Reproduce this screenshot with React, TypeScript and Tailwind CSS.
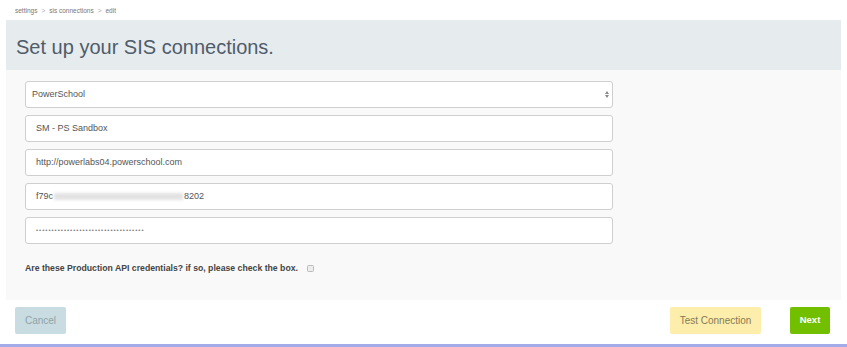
import React from "react";

const font = { fontFamily: '"Liberation Sans", Arial, Helvetica, sans-serif' };

function Field({ children, select }: { children: React.ReactNode; select?: boolean }) {
  return (
    <div className="relative flex h-[27px] w-[588px] items-center rounded-[3px] border border-[#cfcfcf] bg-white text-[9px] text-[#555]">
      {children}
      {select && (
        <div className="absolute right-[3px] top-[9px] flex flex-col items-center gap-[1px]">
          <div className="h-0 w-0 border-x-[2.5px] border-b-[3px] border-x-transparent border-b-[#888]" />
          <div className="h-0 w-0 border-x-[2.5px] border-t-[3px] border-x-transparent border-t-[#888]" />
        </div>
      )}
    </div>
  );
}

export default function App() {
  const dots = "•".repeat(35);
  return (
    <div className="h-[347px] w-[847px] bg-white" style={font}>
      <div className="flex h-[20px] items-center gap-[4px] pl-[15px] pt-[1px] text-[6.5px] text-[#777]">
        <span>settings</span>
        <span className="text-[#aaa]">&gt;</span>
        <span>sis connections</span>
        <span className="text-[#aaa]">&gt;</span>
        <span>edit</span>
      </div>
      <div className="ml-[6px] mr-[6px]">
        <div className="flex h-[50px] items-center bg-[#e6ebee] pl-[10px] pt-[3px]">
          <h1 className="text-[20px] text-[#4f5c6a]">Set up your SIS connections.</h1>
        </div>
        <div className="h-[230px] bg-[#f9f9f9] pl-[19px] pt-[11px]">
          <div className="flex flex-col gap-[7px]">
            <Field select>
              <span className="pl-[6px]">PowerSchool</span>
            </Field>
            <Field>
              <span className="pl-[10px]">SM - PS Sandbox</span>
            </Field>
            <Field>
              <span className="pl-[10px]">http://powerlabs04.powerschool.com</span>
            </Field>
            <Field>
              <span className="pl-[10px]">f79c</span>
              <span className="mx-[1px] h-[7px] w-[129px] bg-[#e2e2e2] blur-[1.5px]" />
              <span>8202</span>
            </Field>
            <Field>
              <span className="pl-[10px] text-[6px] tracking-[1px] text-[#777]">{dots}</span>
            </Field>
          </div>
          <div className="mt-[18px] flex items-center gap-[9px]">
            <span className="text-[8.7px] font-bold text-[#444]">
              Are these Production API credentials? if so, please check the box.
            </span>
            <span className="h-[7px] w-[7px] rounded-[1.5px] border border-[#bbb] bg-[#eee]" />
          </div>
        </div>
        <div className="flex h-[41px] items-center justify-between bg-white pl-[9px] pr-[11px]">
          <button className="flex h-[27px] w-[51px] items-center justify-center rounded-[2px] bg-[#c8dce2] text-[10px] text-[#8fa3a8]">
            Cancel
          </button>
          <div className="flex items-center gap-[29px]">
            <button className="flex h-[27px] w-[91px] items-center justify-center rounded-[2px] bg-[#fdeeab] text-[10px] text-[#857a55]">
              Test Connection
            </button>
            <button className="flex h-[27px] w-[40px] items-center justify-center rounded-[2px] bg-[#72bf00] text-[9.5px] font-bold text-white">
              Next
            </button>
          </div>
        </div>
      </div>
      <div className="mt-[3px] h-[3px] w-full bg-[#a3abe9]" />
    </div>
  );
}
